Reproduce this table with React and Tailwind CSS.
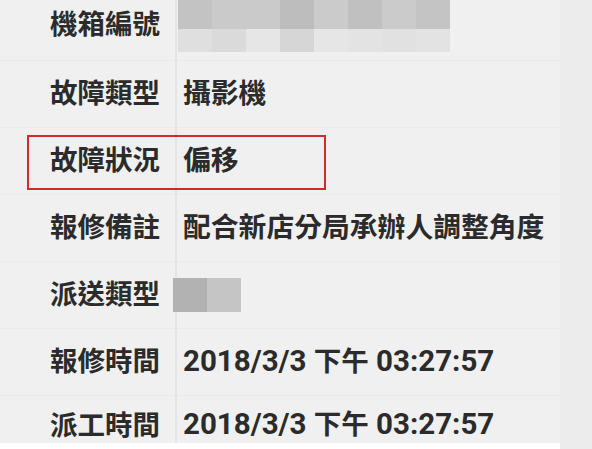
import React from 'react';

const font = { fontFamily: 'Roboto, "Noto Sans CJK TC", sans-serif' };

const topBlocks = ['#c3c3c3', '#cacaca', '#cacaca', '#bdbdbd', '#cbcbcb', '#c0c0c0', '#cbcbcb', '#c4c4c4'];
const bottomBlocks = ['#dfdfdf', '#dadada', '#e6e6e6', '#d6d6d6', '#e6e6e6', '#e3e3e3', '#e1e1e1', '#e3e3e3'];

function Mosaic() {
  return (
    <div className="flex flex-col self-start">
      <div className="flex">
        {topBlocks.map((c, i) => (
          <div key={i} className="w-[34px] h-[29px]" style={{ backgroundColor: c }} />
        ))}
      </div>
      <div className="flex">
        {bottomBlocks.map((c, i) => (
          <div key={i} className="w-[34px] h-[23px]" style={{ backgroundColor: c }} />
        ))}
      </div>
    </div>
  );
}

function Row({ label, children, first, last }) {
  let size = 'h-[67px] border-t border-[#eaeaea]';
  if (first) size = 'h-[60px]';
  if (last) size = 'h-[48px] border-t border-[#eaeaea]';
  const pad = last ? 'pt-[16px]' : '';
  return (
    <div className={`flex shrink-0 ${size}`}>
      <div className={`w-[175px] shrink-0 pl-[50px] flex ${first ? 'items-start pt-[11px]' : last ? 'items-start ' + pad : 'items-center'}`}>
        <span className="text-[27.5px] font-bold text-[#2b2b2b] leading-none whitespace-nowrap">{label}</span>
      </div>
      <div className={`flex-1 flex border-l-2 border-[#e4e4e4] pl-[6px] ${last ? 'items-start pt-[14px]' : ''}`}>
        {children}
      </div>
    </div>
  );
}

function Value({ children }) {
  return (
    <div className="flex items-center">
      <span className="text-[27.8px] font-bold text-[#2b2b2b] leading-none whitespace-nowrap">{children}</span>
    </div>
  );
}

function Time() {
  return (
    <div className="flex items-center">
      <span className="text-[29.5px] font-bold text-[#2b2b2b] leading-none whitespace-nowrap">
        2018/3/3 <span className="text-[27.5px]">下午</span> 03:27:57
      </span>
    </div>
  );
}

export default function App() {
  return (
    <div className="relative w-[592px] h-[449px] bg-[#ececec] overflow-hidden" style={font}>
      <div className="w-[560px] h-[443px] bg-[#f0f0f0] flex flex-col">
        <Row label="機箱編號" first>
          <div className="-ml-[6px] pl-[1px]">
            <Mosaic />
          </div>
        </Row>
        <Row label="故障類型"><Value>攝影機</Value></Row>
        <Row label="故障狀況"><Value>偏移</Value></Row>
        <Row label="報修備註"><Value>配合新店分局承辦人調整角度</Value></Row>
        <Row label="派送類型">
          <div className="flex items-center -ml-[10px]">
            <div className="w-[34px] h-[34px] bg-[#b2b2b2]" />
            <div className="w-[34px] h-[34px] bg-[#c5c5c5]" />
          </div>
        </Row>
        <Row label="報修時間"><Time /></Row>
        <Row label="派工時間" last><Time /></Row>
      </div>
      <div className="h-[6px] bg-white w-[560px]" />
      <div className="absolute left-[27px] top-[135px] w-[299px] h-[55px] border-2 border-[#d42a2a]" />
    </div>
  );
}
